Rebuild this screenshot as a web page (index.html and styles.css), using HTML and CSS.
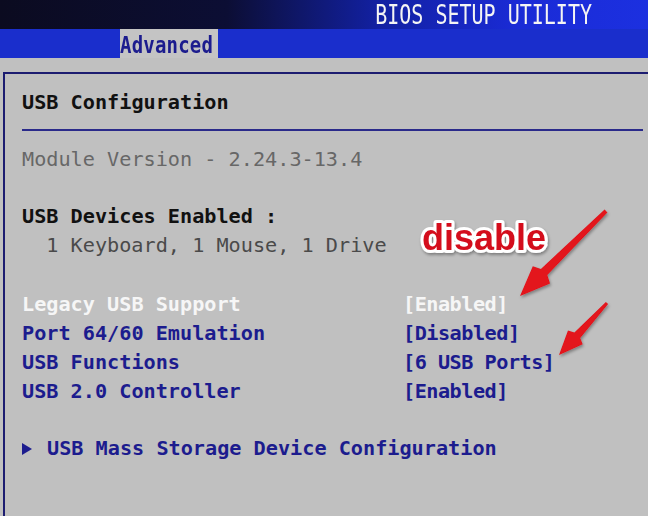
FILE: index.html
```html
<!DOCTYPE html>
<html lang="en">

<head>
    <meta charset="utf-8" />
    <title>BIOS Setup Utility</title>
    <link rel="stylesheet" href="styles.css">
</head>

<body>
    <header class="title-bar">
        <span class="title">BIOS SETUP UTILITY</span>
    </header>

    <nav class="tab-bar">
        <span class="tab"><span class="tab-text">Advanced</span></span>
    </nav>

    <section class="panel">
        <h1 class="panel-title">USB Configuration</h1>
        <hr class="divider">

        <p class="info">Module Version - 2.24.3-13.4</p>

        <p class="label">USB Devices Enabled :</p>
        <p class="devices">1 Keyboard, 1 Mouse, 1 Drive</p>

        <div class="settings">
            <span class="item selected">Legacy USB Support</span>
            <span class="value selected">[Enabled]</span>
            <span class="item">Port 64/60 Emulation</span>
            <span class="value">[Disabled]</span>
            <span class="item">USB Functions</span>
            <span class="value">[6 USB Ports]</span>
            <span class="item">USB 2.0 Controller</span>
            <span class="value">[Enabled]</span>
        </div>

        <p class="submenu">
            <svg class="pointer" width="10" height="12" viewBox="0 0 10 12"><polygon points="0,0 10,6 0,12" /></svg>
            <span>USB Mass Storage Device Configuration</span>
        </p>
    </section>

    <!-- red annotation drawn over the screenshot -->
    <svg class="annotation" width="648" height="516" viewBox="0 0 648 516">
        <defs>
            <filter id="shade" x="-20%" y="-20%" width="140%" height="140%">
                <feDropShadow dx="1" dy="2" stdDeviation="1.5" flood-color="#000" flood-opacity="0.35" />
            </filter>
        </defs>
        <text class="note" x="422" y="250" filter="url(#shade)">disable</text>
        <polygon class="arrow" filter="url(#shade)"
            points="520,296 550,283.5 547.3,274.9 607.4,212.4 604.6,209.6 540.9,268.9 532.8,266.3" />
        <polygon class="arrow" filter="url(#shade)"
            points="559,355 582.6,344.2 580.2,337.9 608.1,304.0 605.9,302.0 574.4,332.5 568.0,330.6" />
    </svg>
</body>

</html>
```

FILE: styles.css
```css
* {
    box-sizing: border-box;
}

body {
    margin: 0;
    width: 648px;
    height: 516px;
    overflow: hidden;
    position: relative;
    background: #c0c0c0;
    font-family: "DejaVu Sans Mono", "Liberation Mono", monospace;
    font-size: 20.2px;
}

p,
h1 {
    margin: 0;
    font-size: 20.2px;
    line-height: 29px;
}

.title-bar {
    height: 29px;
    display: flex;
    justify-content: flex-end;
    align-items: center;
    padding-right: 56px;
    background: linear-gradient(90deg, #0b0b20 0%, #0c0e34 35%, #1220a0 58%, #1a2bd6 80%, #1c30e0 100%);
}

.title {
    display: inline-block;
    color: #f4f4f4;
    font-size: 20px;
    transform: scaleY(1.3);
}

.tab-bar {
    height: 29px;
    padding-left: 120px;
    background: #1a2ecc;
}

.tab {
    display: inline-block;
    height: 29px;
    width: 98px;
    background: #c4c4c4;
    color: #1c1c8e;
    line-height: 31px;
}

.tab-text {
    display: inline-block;
    font-size: 19px;
    font-weight: bold;
    letter-spacing: 0.2px;
    transform: scaleY(1.25);
}

.panel {
    margin: 14px 0 0 3px;
    height: 444px;
    border-top: 2px solid #1c1c70;
    border-left: 2px solid #1c1c70;
    padding: 14px 5px 0 17px;
}

.panel-title {
    font-weight: bold;
    color: #111;
}

.divider {
    margin: 12px 0 14px;
    border: 0;
    height: 2px;
    background: #2a2a8a;
}

.info {
    color: #676767;
}

.label {
    margin-top: 28px;
    font-weight: bold;
    color: #111;
}

.devices {
    padding-left: 2ch;
    color: #4a4a4a;
}

.settings {
    margin-top: 29px;
    display: grid;
    grid-template-columns: 381px auto;
    grid-auto-rows: 29px;
    align-items: center;
}

.item,
.value {
    color: #1c1c8e;
    font-weight: bold;
}

.value {
    letter-spacing: -0.5px;
}

.selected {
    color: #f6f6f6;
}

.submenu {
    margin-top: 29px;
    display: flex;
    align-items: center;
    gap: 15px;
    color: #1c1c8e;
    font-weight: bold;
}

.pointer {
    fill: #1c1c8e;
}

.annotation {
    position: absolute;
    left: 0;
    top: 0;
}

.note {
    font-family: "Liberation Sans", Arial, sans-serif;
    font-weight: bold;
    font-size: 36px;
    fill: #d4101e;
    stroke: #fff;
    stroke-width: 6px;
    stroke-linejoin: round;
    paint-order: stroke;
}

.arrow {
    fill: #e3121a;
}
```
